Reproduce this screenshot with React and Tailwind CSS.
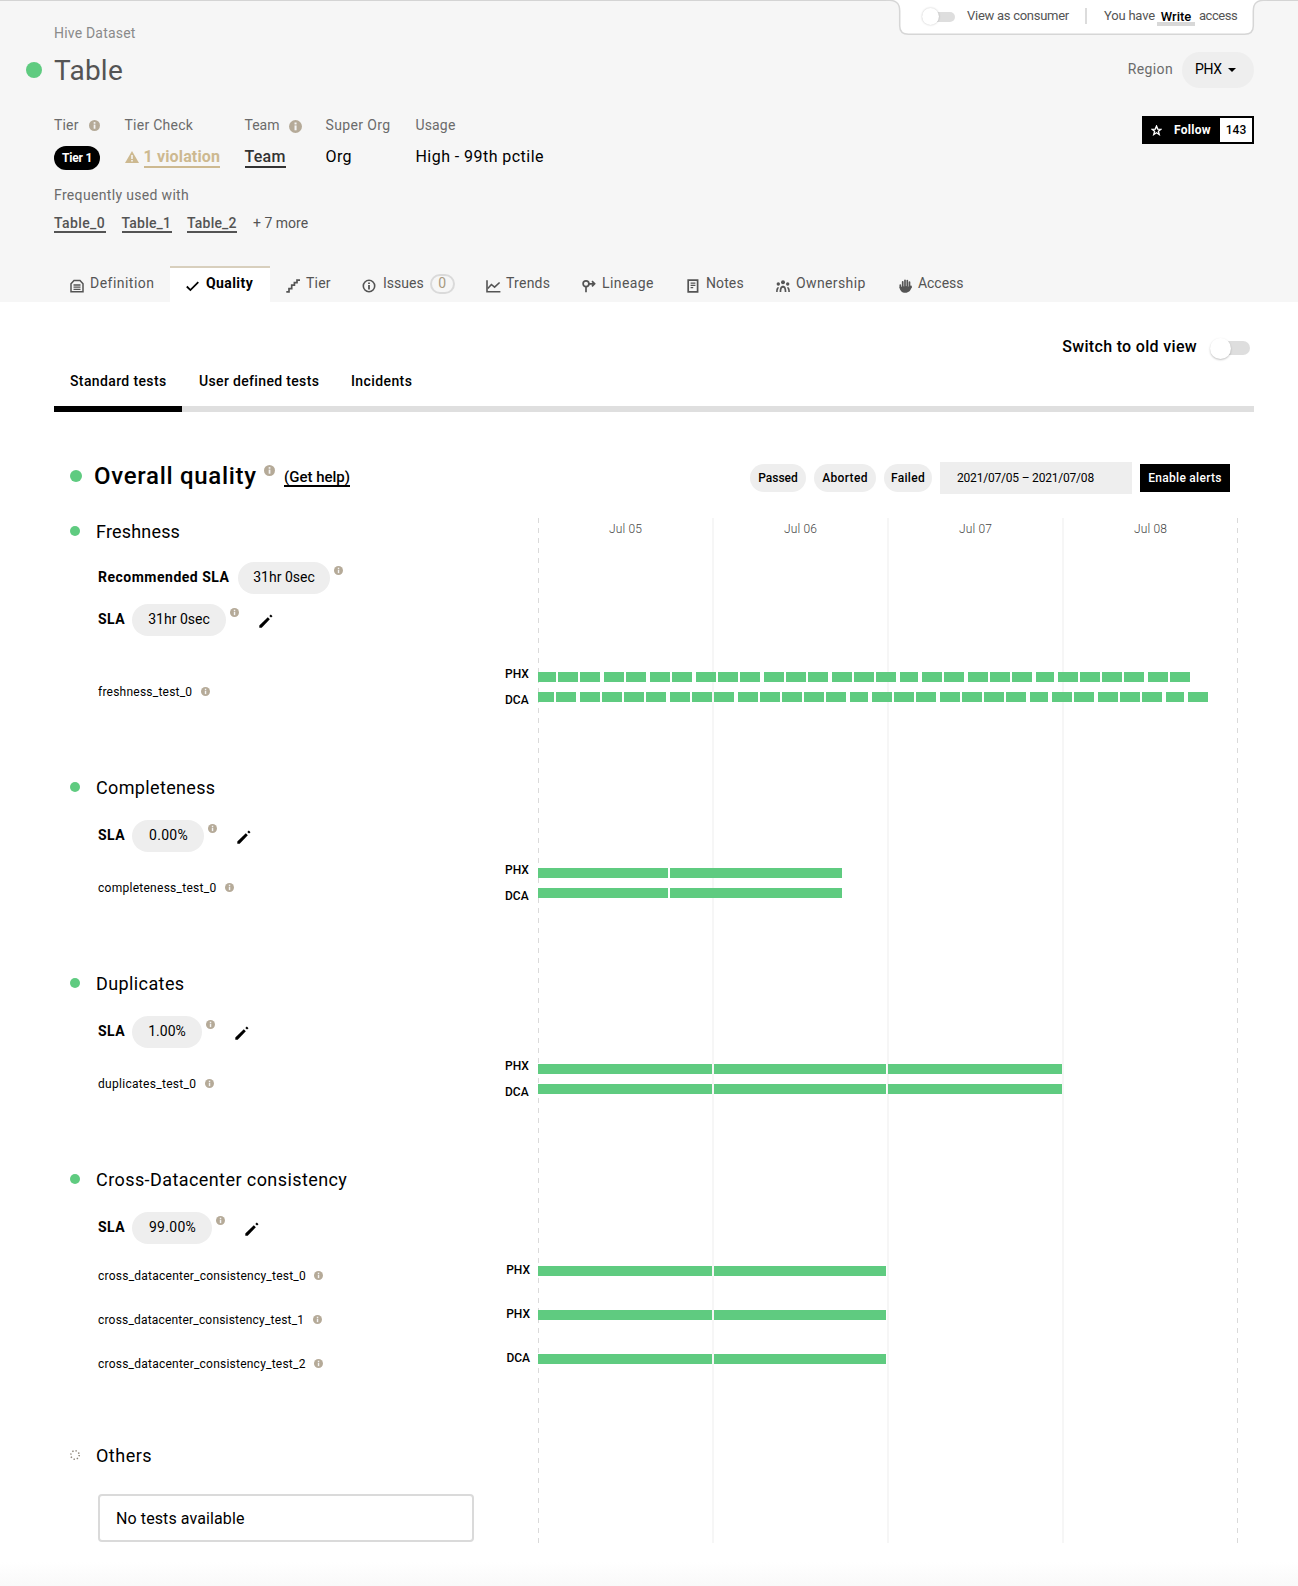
import React from "react";

const FONT = "font-['Roboto','Liberation_Sans',sans-serif]";

function Info({ className = "" }) {
  return (
    <svg viewBox="0 0 12 12" className={`shrink-0 ${className}`}>
      <circle cx="6" cy="6" r="6" fill="#b5aa98" />
      <rect x="5.1" y="5" width="1.9" height="4.5" fill="#f4f4f4" />
      <rect x="5.1" y="2.3" width="1.9" height="1.8" fill="#f4f4f4" />
    </svg>
  );
}

function Pencil() {
  return (
    <svg viewBox="0 0 14 14" className="size-[14px] shrink-0">
      <path d="M0.3 13.8v-2.300L8.800 3.300l2 2L2.700 13.800z" />
      <path d="M10.300 1.900 11.800.5l1.700 1.700-1.500 1.400z" />
    </svg>
  );
}

const tabIcons = {
  definition: (
    <svg viewBox="0 0 14 14" className="size-[14px]" fill="none" stroke="currentColor" strokeWidth="1.5">
      <path d="M1 12.800V4.800L4 1.500h6L13 4.800v8z" />
      <path d="M3.500 6h7M3.500 8.200h7M3.500 10.400h7" strokeWidth="1.300" />
    </svg>
  ),
  quality: (
    <svg viewBox="0 0 13 14" className="h-[14px] w-[13px]" fill="none" stroke="currentColor" strokeWidth="1.8">
      <path d="M.8 7.5 4.4 11.100 12.3 3.200" />
    </svg>
  ),
  tier: (
    <svg viewBox="0 0 14 14" className="size-[14px]" fill="none" stroke="currentColor" strokeWidth="1.700">
      <path d="M.3 12.8h2.700V9.600h2.700V6.200h2.700V3.600H11V1.200h3" />
    </svg>
  ),
  issues: (
    <svg viewBox="0 0 14 14" className="size-[14px]" fill="none" stroke="currentColor" strokeWidth="1.6">
      <circle cx="7" cy="7" r="5.7" />
      <path d="M7 3.4v1.6M7 6.1v4.5" strokeWidth="1.8" />
    </svg>
  ),
  trends: (
    <svg viewBox="0 0 15 14" className="h-[14px] w-[15px]" fill="none" stroke="currentColor" strokeWidth="1.600">
      <path d="M1 1.300v11.400h13.400" />
      <path d="m1.800 9.500 3.600-4 3.200 2.700 5-4.700" />
    </svg>
  ),
  lineage: (
    <svg viewBox="0 0 14 14" className="size-[14px]" fill="none" stroke="currentColor" strokeWidth="1.7">
      <circle cx="4" cy="4.800" r="2.900" />
      <path d="M4 7.800v5.400M7 4.800h5.400M10 2.200l2.600 2.600L10 7.400" />
    </svg>
  ),
  notes: (
    <svg viewBox="0 0 12 14" className="h-[14px] w-[12px]" fill="none" stroke="currentColor" strokeWidth="1.7">
      <path d="M1.200 1.200h9.400v11.600H1.200z" />
      <path d="M3.600 4.200h4.800M3.600 6.400h4.800M3.600 8.600h2.600" strokeWidth="1.300" />
    </svg>
  ),
  ownership: (
    <svg viewBox="0 0 14 14" className="size-[14px]" fill="currentColor">
      <circle cx="7" cy="3.200" r="2" />
      <circle cx="2.300" cy="5" r="1.700" />
      <circle cx="11.700" cy="5" r="1.700" />
      <path d="M3.600 13c0-4.300 1.200-6.300 3.400-6.300s3.400 2 3.400 6.300H8.700c0-2.800-.5-4.300-1.700-4.300S5.300 10.200 5.300 13zM.1 13c0-3.200.7-5 2.700-5l-.4 2c-.6.500-.7 1.600-.7 3zM13.900 13c0-3.200-.7-5-2.700-5l.4 2c.6.500.7 1.600.7 3z" />
    </svg>
  ),
  access: (
    <svg viewBox="0 0 13 14" className="h-[14px] w-[13px]" fill="none" stroke="currentColor" strokeLinecap="round">
      <path d="M3.700 8V2.800M6 7V1.300M8.300 7V1.600M10.500 8V3.200M1.300 6V8.500M12 7.400v1" strokeWidth="1.700" />
      <path d="M.6 8c0 3.500 2.400 5.800 5.700 5.800s6-2.300 6-6H11C8 6.800 6 6.800 3.500 7.500z" fill="currentColor" stroke="none" />
    </svg>
  ),
};

const tabs = [
  { id: "definition", label: "Definition", w: "w-[116px]", gap: "ml-[6px]", track: "tracking-[0.470px]" },
  { id: "quality", label: "Quality", w: "w-[100px]", gap: "ml-[7px]", track: "tracking-[0.420px]", active: true },
  { id: "tier", label: "Tier", w: "w-[76px]", gap: "ml-[6px]", track: "tracking-[0.2px]" },
  { id: "issues", label: "Issues", w: "w-[124px]", gap: "ml-[7px]", track: "tracking-[0px]", badge: "0" },
  { id: "trends", label: "Trends", w: "w-[96px]", gap: "ml-[5px]", track: "tracking-[0.250px]" },
  { id: "lineage", label: "Lineage", w: "w-[105px]", gap: "ml-[6px]", track: "tracking-[0.400px]" },
  { id: "notes", label: "Notes", w: "w-[89px]", gap: "ml-[7px]", track: "tracking-[0.1px]" },
  { id: "ownership", label: "Ownership", w: "w-[123px]", gap: "ml-[6px]", track: "tracking-[0.380px]" },
  { id: "access", label: "Access", w: "w-[97px]", gap: "ml-[6px]", track: "tracking-[-0.05px]" },
];

function AccessBar() {
  return (
    <div className="absolute -top-px right-[31px] h-9 w-[381px]">
      <svg viewBox="0 0 381 36" className="absolute inset-0 h-9 w-[381px]">
        <path
          d="M0 0C10 0 13.700 3 13.700 11V26Q13.700 34.200 22.500 34.200H358.500Q367.300 34.200 367.300 26V11C367.300 3 371 0 381 0"
          fill="#fff"
          stroke="#d6d6d6"
          strokeWidth="1.500"
        />
      </svg>
      <div className="relative flex h-[31px] items-center pl-[36px] text-[13px] whitespace-nowrap text-[#545454]">
        <div className="relative mt-[2px] h-[10px] w-[33px] rounded-full bg-[#dedede]">
          <div className="absolute top-[-4px] left-0 size-[17px] rounded-full bg-white shadow-[0_0_2px_rgba(0,0,0,0.250)]" />
        </div>
        <span className="ml-[12px] w-[102px] tracking-[-0.270px]">View as consumer</span>
        <span className="ml-[16px] h-4 w-[2px] bg-[#dcdcdc]" />
        <span className="ml-[17px] w-[51px] tracking-[-0.200px]">You have</span>
        <span className="mt-[6px] ml-[2px] flex h-[20px] w-[38px] justify-center bg-[linear-gradient(#d8d8d8,#d8d8d8)] bg-[length:100%_4px] bg-[position:0_13px] bg-no-repeat leading-[15px] font-medium text-black">
          Write
        </span>
        <span className="ml-[4px] tracking-[-0.450px]">access</span>
      </div>
    </div>
  );
}

function Field({ label, w, track = "", info, children }) {
  return (
    <div className={w}>
      <div className={`flex h-4 items-center text-[14px] text-[#6b6b6b] ${track}`}>
        {label}
        {info}
      </div>
      <div className="mt-[13px] flex h-6 items-center pb-[2px] text-[16px] text-black">{children}</div>
    </div>
  );
}

function Header() {
  return (
    <header className="relative h-[302px] border-t border-[#d4d4d4] bg-[#f6f6f6] pt-[24px] pr-[44px] pl-[54px] whitespace-nowrap">
      <AccessBar />
      <div className="h-4 text-[14px] leading-4 tracking-[0.200px] text-[#8a8a8a]">Hive Dataset</div>
      <div className="mt-[9px] flex h-10 items-center">
        <span className="-ml-[28px] size-4 rounded-full bg-[#5fcb80]" />
        <h1 className="mt-px ml-[12px] text-[28px] tracking-[0.250px] text-[#545454]">Table</h1>
        <div className="ml-auto flex items-center text-[14px]">
          <span className="-mt-px tracking-[0.350px] text-[#6b6b6b]">Region</span>
          <button className="ml-[9px] flex h-9 w-[72px] items-center rounded-full bg-[#eeeeee] pl-[13px] text-black">
            <span className="-mt-px tracking-[-0.400px]">PHX</span>
            <svg viewBox="0 0 8 4" className="ml-[6px] h-[4px] w-[8px]">
              <path d="M0 0h8L4 4z" />
            </svg>
          </button>
        </div>
      </div>
      <div className="mt-[27px] flex">
        <Field label="Tier" w="w-[70.500px]" track="tracking-[0.150px]" info={<Info className="mt-px ml-[10px] size-[11px]" />}>
          <span className="mt-[2px] flex h-6 w-[46px] items-center justify-center rounded-full bg-black text-[12px] font-bold tracking-[-0.2px] text-white">
            Tier 1
          </span>
        </Field>
        <Field label="Tier Check" w="w-[120px]" track="tracking-[0.250px]">
          <svg viewBox="0 0 14 12" className="-mt-px h-[12px] w-[14px]">
            <path d="M7 0l7 12H0z" fill="#cdb990" />
            <path d="M6.200 4h1.600v4H6.200zM6.200 9h1.600v1.500H6.200z" fill="#f6f6f6" />
          </svg>
          <span className="mt-px ml-[5px] border-b-2 border-[#cdb990] text-[16px] leading-[18px] font-bold tracking-[0.150px] text-[#cdb990]">
            1 violation
          </span>
        </Field>
        <Field label="Team" w="w-[81px]" info={<Info className="mt-[3px] ml-[9px] size-[13px]" />}>
          <span className="mt-px border-b-2 border-[#333] leading-[18px] font-medium tracking-[0.250px] text-[#333]">Team</span>
        </Field>
        <Field label="Super Org" w="w-[90px]" track="tracking-[0.370px]">
          <span className="tracking-[0.400px]">Org</span>
        </Field>
        <Field label="Usage" w="w-[140px]" track="tracking-[0.150px]">
          <span className="tracking-[0.450px]">High - 99th pctile</span>
        </Field>
        <div className="-mt-px ml-auto flex h-7 w-[112px] items-center bg-black p-[2px] text-[12px] font-bold text-white">
          <svg viewBox="0 0 12 12" className="ml-[7px] size-[11px]" fill="none" stroke="#fff" strokeWidth="1.500">
            <path d="M6 1.200l1.300 3.300 3.500.2-2.700 2.200.9 3.500L6 8.500l-3 1.900.9-3.500L1.200 4.700l3.500-.2z" />
          </svg>
          <span className="ml-[12px] tracking-[0.300px]">Follow</span>
          <span className="ml-auto flex h-6 w-8 items-center justify-center bg-white font-medium text-black">143</span>
        </div>
      </div>
      <div className="mt-[17px] h-4 text-[14px] leading-4 tracking-[0.330px] text-[#6b6b6b]">Frequently used with</div>
      <div className="mt-[12px] flex h-[17.500px] text-[14px] leading-4 font-medium text-[#545454]">
        <a className="w-[52px] border-b-2 border-[#545454] tracking-[0.400px]">Table_0</a>
        <a className="ml-[15.500px] w-[50px] border-b-2 border-[#545454] tracking-[0.200px]">Table_1</a>
        <a className="ml-[15.500px] w-[50px] border-b-2 border-[#545454] tracking-[0.200px]">Table_2</a>
        <span className="ml-[16px] font-normal">+ 7 more</span>
      </div>
      <nav className="mt-[33.500px] flex h-9">
        {tabs.map((t) => (
          <div
            key={t.id}
            className={`flex items-center border-t-2 pb-px pl-4 text-[14px] ${t.w} ${
              t.active ? "border-[#d8cfbd] bg-white font-bold text-black" : "border-transparent text-[#545454]"
            }`}
          >
            <span className="mt-[2px]">{tabIcons[t.id]}</span>
            <span className={`-mt-[3px] ${t.gap} ${t.track}`}>{t.label}</span>
            {t.badge && (
              <span className="-mt-[2px] ml-[6px] flex h-[20px] w-[25px] items-center justify-center rounded-full border-2 border-[#dadada] text-[#a89a80]">
                {t.badge}
              </span>
            )}
          </div>
        ))}
      </nav>
    </header>
  );
}

const PHX = [[0,18],[20,40],[42,62],[66,86],[88,108],[112,132],[134,154],[158,178],[180,200],[202,222],[226,246],[248,268],[270,290],[294,314],[316,336],[338,358],[362,380],[384,404],[406,426],[430,450],[452,472],[474,494],[498,516],[520,540],[542,562],[564,584],[586,606],[610,630],[632,652]];
const DCA = [[0,16],[18,38],[42,62],[64,84],[86,106],[108,128],[132,152],[154,174],[176,196],[200,220],[222,242],[244,264],[266,286],[288,308],[312,330],[334,354],[356,376],[378,398],[402,422],[424,444],[446,466],[468,488],[492,510],[514,534],[536,556],[560,580],[582,602],[604,624],[628,646],[650,670]];
const PARTIAL = [[0,130],[132,304]];
const THREE_DAYS = [[0,174],[176,348],[350,524]];
const TWO_DAYS = [[0,174],[176,348]];

function Bars({ runs }) {
  return (
    <div className="flex h-[10px]">
      {runs.map(([from, to], i) => (
        <div
          key={from}
          className="h-full bg-[#5fcb80]"
          style={{ width: to - from, marginLeft: i ? from - runs[i - 1][1] : 0 }}
        />
      ))}
    </div>
  );
}

function TestRow({ name, track, rows, single }) {
  return (
    <div className={`flex text-[12px] ${single ? "h-11" : "h-[52px]"}`}>
      <div className={`flex h-4 w-[406px] items-center pl-[28px] ${single ? "mt-[14px]" : "mt-[24px]"}`}>
        <span className={track}>{name}</span>
        <Info className="ml-[8.500px] -mt-px size-[9px]" />
      </div>
      <div className={`flex w-[62px] flex-col pr-[8px] font-medium ${single ? "items-end pt-[3px]" : "items-start pt-px pl-[29px]"}`}>
        {rows.map(([dc]) => (
          <div key={dc} className="h-[26px] leading-[26px]">{dc}</div>
        ))}
      </div>
      <div className="flex flex-col gap-[10px] pt-[12px]">
        {rows.map(([dc, runs]) => (
          <Bars key={dc} runs={runs} />
        ))}
      </div>
    </div>
  );
}

function Sla({ label = "SLA", labelClass = "w-[27px]", value, pill, gap = "ml-[7px]", infoGap = "ml-[4px]", edit = true, mt }) {
  return (
    <div className={`flex h-8 items-center pl-[28px] text-[14px] ${mt}`}>
      <span className={`-mt-[2px] font-bold whitespace-nowrap tracking-[0.500px] ${labelClass}`}>{label}</span>
      <span className={`flex h-8 items-center justify-center rounded-full bg-[#eeeeee] pb-px whitespace-nowrap ${gap} ${pill}`}>{value}</span>
      <Info className={`-mt-[15px] size-[9px] ${infoGap}`} />
      {edit && (
        <span className="mt-px ml-[20px]">
          <Pencil />
        </span>
      )}
    </div>
  );
}

function SectionTitle({ children, track, pending, mt = "" }) {
  return (
    <div className={`flex h-7 items-center ${mt}`}>
      {pending ? (
        <svg viewBox="0 0 10 10" className="size-[10px]">
          <circle cx="5" cy="5" r="4.200" fill="none" stroke="#8a8377" strokeWidth="1.500" strokeDasharray="1.300 2" />
        </svg>
      ) : (
        <span className="size-[10px] rounded-full bg-[#5fcb80]" />
      )}
      <h3 className={`mt-px ml-[16px] text-[18px] whitespace-nowrap ${track}`}>{children}</h3>
    </div>
  );
}

function Grid() {
  return (
    <div className="absolute top-px left-[468px] grid h-[1025px] w-[700px] grid-cols-4 pt-[3px] text-center text-[12px] font-light text-[#444]">
      <svg className="absolute top-0 left-0 h-full w-[702px]" fill="none">
        <path d="M.5 0V1025M699.500 0V1025" stroke="#dadada" strokeDasharray="5 5" />
        <path d="M175 0V1025M350 0V1025M525 0V1025" stroke="#f6f6f6" strokeWidth="2" />
      </svg>
      {["Jul 05", "Jul 06", "Jul 07", "Jul 08"].map((d) => (
        <div key={d} className="leading-[16px] tracking-[0.150px]">{d}</div>
      ))}
    </div>
  );
}

export default function App() {
  return (
    <div className={`h-[1586px] w-[1298px] overflow-hidden bg-white text-black ${FONT}`}>
      <Header />
      <main className="pr-[44px] pl-[54px]">
        <div className="flex h-[59px] items-end justify-end pr-[4px]">
          <div className="flex h-7 items-center">
            <span className="text-[16px] font-medium tracking-[0.320px]">Switch to old view</span>
            <div className="relative mt-px ml-[14px] h-[14px] w-[39px] rounded-full bg-[#dedede]">
              <div className="absolute top-[-3px] -left-[1px] size-[21px] rounded-full bg-white shadow-[0_1px_2px_rgba(0,0,0,0.250)]" />
            </div>
          </div>
        </div>
        <div className="mt-[12px] flex h-[39px] border-b-[6px] border-[#dfdfdf] text-[14px] leading-4 font-medium whitespace-nowrap">
          <div className="-mb-[6px] h-[39px] w-[128px] border-b-[6px] border-black pl-4 tracking-[0.370px]">Standard tests</div>
          <div className="ml-[17px] w-[152px] tracking-[0.340px]">User defined tests</div>
          <div className="tracking-[0.400px]">Incidents</div>
        </div>

        <section className="pr-[24px] pl-4">
          <div className="mt-[50px] flex h-8 items-center whitespace-nowrap">
            <span className="-mt-[4px] size-3 rounded-full bg-[#5fcb80]" />
            <h2 className="-mt-[5px] ml-[12px] w-[162px] text-[24px] font-medium tracking-[0.700px]">Overall quality</h2>
            <Info className="-mt-[15px] ml-[8px] size-[11px]" />
            <a className="-mt-px ml-[9px] border-b-2 border-black text-[15px] leading-[16px] font-medium">(Get help)</a>
            <div className="ml-auto flex items-center gap-[8px] text-[12px] font-medium">
              <span className="flex h-7 w-[56px] items-center justify-center rounded-full bg-[#eeeeee]">Passed</span>
              <span className="flex h-7 w-[62px] items-center justify-center rounded-full bg-[#eeeeee] tracking-[0.350px]">Aborted</span>
              <span className="flex h-7 w-[48px] items-center justify-center rounded-full bg-[#eeeeee] tracking-[0.300px]">Failed</span>
              <span className="flex h-8 w-[192px] items-center bg-[#eeeeee] pl-[17px] font-normal tracking-[-0.200px]">2021/07/05 – 2021/07/08</span>
              <span className="flex h-7 w-[90px] items-center justify-center bg-black tracking-[0.280px] text-white">Enable alerts</span>
            </div>
          </div>

          <div className="relative mt-[23px]">
            <Grid />
            <div className="relative">
              <SectionTitle track="tracking-[0.180px]">Freshness</SectionTitle>
              <Sla mt="mt-[17px]" label="Recommended SLA" labelClass="w-[132px]" value="31hr 0sec" pill="w-[92px]" gap="ml-[8px]" edit={false} />
              <Sla mt="mt-[10px]" value="31hr 0sec" pill="w-[94px]" />
              <div className="mt-[24px]">
                <TestRow name="freshness_test_0" track="tracking-[0.230px]" rows={[["PHX", PHX], ["DCA", DCA]]} />
              </div>

              <SectionTitle mt="mt-[61px]" track="tracking-[0.350px]">Completeness</SectionTitle>
              <Sla mt="mt-[19px]" value="0.00%" pill="w-[72px] pl-px tracking-[0.300px]" />
              <div className="mt-[4px]">
                <TestRow name="completeness_test_0" track="tracking-[0.270px]" rows={[["PHX", PARTIAL], ["DCA", PARTIAL]]} />
              </div>

              <SectionTitle mt="mt-[61px]" track="tracking-[0.400px]">Duplicates</SectionTitle>
              <Sla mt="mt-[19px]" value="1.00%" pill="w-[70px]" />
              <div className="mt-[4px]">
                <TestRow name="duplicates_test_0" track="tracking-[0.300px]" rows={[["PHX", THREE_DAYS], ["DCA", THREE_DAYS]]} />
              </div>

              <SectionTitle mt="mt-[61px]" track="tracking-[0.420px]">Cross-Datacenter consistency</SectionTitle>
              <Sla mt="mt-[19px]" value="99.00%" pill="w-[80px] pl-px tracking-[0.300px]" />
              <div className="mt-[10px]">
                <TestRow single name="cross_datacenter_consistency_test_0" track="tracking-[0.240px]" rows={[["PHX", TWO_DAYS]]} />
                <TestRow single name="cross_datacenter_consistency_test_1" track="tracking-[0.190px]" rows={[["PHX", TWO_DAYS]]} />
                <TestRow single name="cross_datacenter_consistency_test_2" track="tracking-[0.230px]" rows={[["DCA", TWO_DAYS]]} />
              </div>

              <SectionTitle mt="mt-[55px]" pending track="tracking-[0.480px]">Others</SectionTitle>
              <div className="mt-[25px] ml-[28px] flex h-12 w-[376px] items-center rounded-[4px] border-2 border-[#dadada] pt-px pl-[16px] text-[16px] tracking-[0.100px]">
                No tests available
              </div>
            </div>
          </div>
        </section>
      </main>
      <div className="mt-[20px] h-6 bg-gradient-to-b from-white to-[#f9f9f9]" />
    </div>
  );
}
